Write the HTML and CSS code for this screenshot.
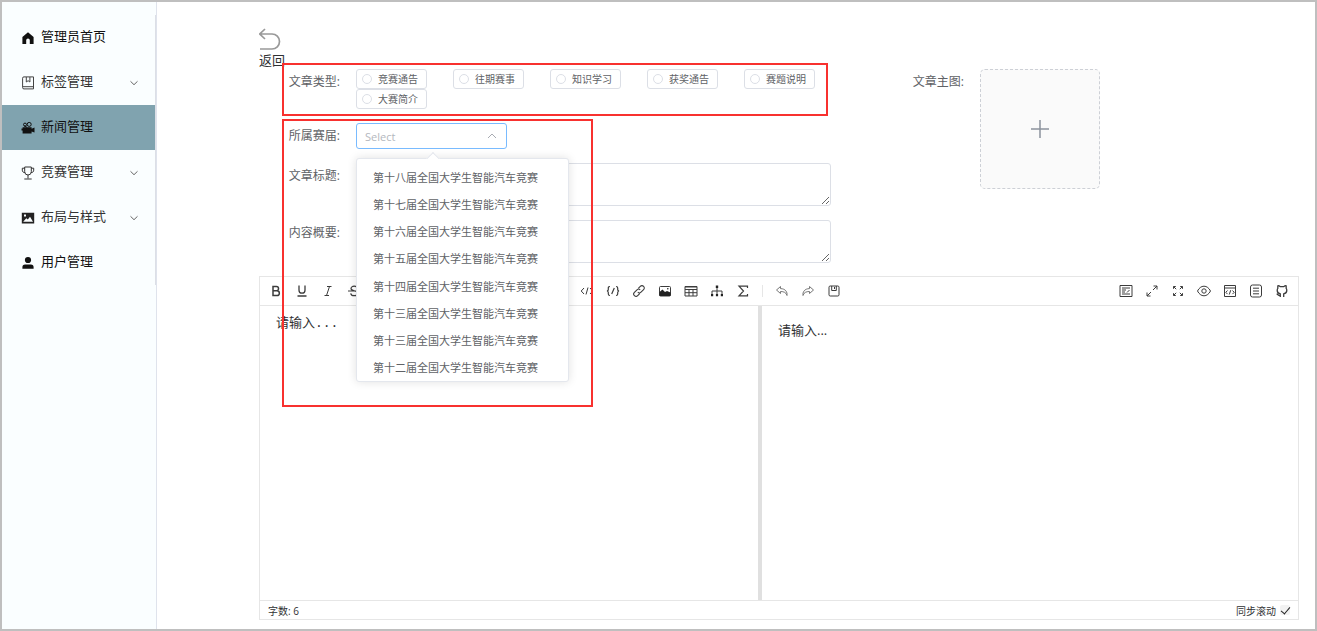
FILE: index.html
```html
<!DOCTYPE html>
<html lang="zh-CN">
<head>
<meta charset="utf-8">
<title>新闻管理</title>
<link rel="stylesheet" href="styles.css">
</head>
<body>
<div class="app">
  <aside class="sidebar">
    <nav class="menu">
      <a class="menu-item" href="#">
        <svg class="menu-icon" viewBox="0 0 14 14"><path fill="#111" d="M7 1.2 1.4 6v7h3.8V9.2a1.8 1.8 0 0 1 3.6 0V13h3.8V6z"/></svg>
        <span class="menu-text">管理员首页</span>
      </a>
      <a class="menu-item menu-sub" href="#">
        <svg class="menu-icon" viewBox="0 0 14 14"><path fill="none" stroke="#444" d="M3 .9h9.500v12H3a1.300 1.300 0 0 1-1.400-1.300V2.200A1.300 1.300 0 0 1 3 .9zM1.800 10.700h10.700M5.300 1v5l1.800-1.300L8.900 6V1"/></svg>
        <span class="menu-text">标签管理</span>
        <svg class="chevron" viewBox="0 0 10 10"><path fill="none" stroke="#666" d="m1.5 3.3 3.5 3.4 3.5-3.4"/></svg>
      </a>
      <a class="menu-item menu-active" href="#">
        <svg class="menu-icon" viewBox="0 0 14 14"><g fill="#111"><path d="M1.6 6.3h9v1.5l2.9-1.2v5l-2.9-1v1.9h-9zM.5 7.5h2v2h-2z"/><path fill="none" stroke="#111" d="M6 6.3 3 4.8"/></g><g fill="none" stroke="#111"><circle cx="4" cy="3.6" r="1.5"/><circle cx="8.2" cy="3.4" r="2"/></g></svg>
        <span class="menu-text">新闻管理</span>
      </a>
      <a class="menu-item menu-sub" href="#">
        <svg class="menu-icon" viewBox="0 0 14 14"><path fill="none" stroke="#333" d="M3.7 1h6.6v4.700a3.3 3.3 0 0 1-6.6 0zM3.700 2.200H1.300v2a2.2 2.2 0 0 0 2.600 2.300M10.300 2.200h2.400v2a2.2 2.2 0 0 1-2.600 2.300M7 9v3.500M3.300 13h7.400"/></svg>
        <span class="menu-text">竞赛管理</span>
        <svg class="chevron" viewBox="0 0 10 10"><path fill="none" stroke="#666" d="m1.5 3.3 3.5 3.4 3.5-3.4"/></svg>
      </a>
      <a class="menu-item menu-sub" href="#">
        <svg class="menu-icon" viewBox="0 0 14 14"><path fill="#222" fill-rule="evenodd" d="M.8 1.8h12.4v10.6H.8zM2.2 10.8h9.8L9 5.8 6.8 8.6 5.3 7.2zM3 3.6v2h2v-2z"/></svg>
        <span class="menu-text">布局与样式</span>
        <svg class="chevron" viewBox="0 0 10 10"><path fill="none" stroke="#666" d="m1.5 3.3 3.5 3.4 3.5-3.4"/></svg>
      </a>
      <a class="menu-item" href="#">
        <svg class="menu-icon" viewBox="0 0 14 14"><circle cx="7" cy="4" r="3.1" fill="#111"/><path fill="#111" d="M1.4 12.8v-1.6A2.7 2.7 0 0 1 4.1 8.5h5.8a2.7 2.7 0 0 1 2.7 2.7v1.6z"/></svg>
        <span class="menu-text">用户管理</span>
      </a>
    </nav>
  </aside>

  <main class="main">
    <button class="back" type="button">
      <svg class="back-icon" viewBox="0 0 22 24"><path fill="none" stroke="#999" stroke-width="1.7" d="M6 1 .8 6l5.200 5M1 6h12a6.900 6.900 0 0 1 0 15H1"/></svg>
      <span>返回</span>
    </button>

    <form class="form">
      <div class="fields">
        <div class="row">
          <span class="label" id="type-label">文章类型:</span>
          <div class="radios" role="radiogroup" aria-labelledby="type-label">
            <label class="radio"><input type="radio" name="type">竞赛通告</label>
            <label class="radio"><input type="radio" name="type">往期赛事</label>
            <label class="radio"><input type="radio" name="type">知识学习</label>
            <label class="radio"><input type="radio" name="type">获奖通告</label>
            <label class="radio"><input type="radio" name="type">赛题说明</label>
            <label class="radio"><input type="radio" name="type">大赛简介</label>
          </div>
        </div>
        <div class="row">
          <label class="label" for="session">所属赛届:</label>
          <div class="select-wrap">
            <select class="select" id="session"><option>Select</option></select>
            <svg class="select-arrow" viewBox="0 0 10 10"><path fill="none" stroke="#a8abb2" d="M1 7l4-4 4 4"/></svg>
            <div class="popper">
              <ul class="options" role="listbox" aria-label="所属赛届">
                <li role="option">第十八届全国大学生智能汽车竞赛</li>
                <li role="option">第十七届全国大学生智能汽车竞赛</li>
                <li role="option">第十六届全国大学生智能汽车竞赛</li>
                <li role="option">第十五届全国大学生智能汽车竞赛</li>
                <li role="option">第十四届全国大学生智能汽车竞赛</li>
                <li role="option">第十三届全国大学生智能汽车竞赛</li>
                <li role="option">第十三届全国大学生智能汽车竞赛</li>
                <li role="option">第十二届全国大学生智能汽车竞赛</li>
              </ul>
            </div>
          </div>
        </div>
        <div class="row">
          <label class="label" for="title">文章标题:</label>
          <textarea class="textarea" id="title"></textarea>
        </div>
        <div class="row">
          <label class="label" for="summary">内容概要:</label>
          <textarea class="textarea" id="summary"></textarea>
        </div>
        <div class="mark mark-types"></div>
        <div class="mark mark-session"></div>
      </div>
      <div class="row cover">
        <span class="label" id="cover-label">文章主图:</span>
        <button class="upload" type="button" aria-labelledby="cover-label">
          <svg class="upload-icon" viewBox="0 0 20 20"><path stroke="#8c939d" stroke-width="1.5" d="M10 1v18M1 10h18"/></svg>
        </button>
      </div>
    </form>

    <section class="editor">
      <div class="toolbar">
        <div class="tools">
          <button class="tool" type="button" aria-label="加粗"><svg viewBox="0 0 14 14"><path stroke-width="1.5" d="M4 2.5h3.4a2.1 2.1 0 0 1 0 4.3H4zM4 6.8h4a2.3 2.3 0 0 1 0 4.7H4z"/></svg></button>
          <button class="tool" type="button" aria-label="下划线"><svg viewBox="0 0 14 14"><path stroke-width="1.3" d="M4 1.5v4.7a3 3 0 0 0 6 0V1.5M2.5 12h9"/></svg></button>
          <button class="tool" type="button" aria-label="斜体"><svg viewBox="0 0 14 14"><path d="M6 2.5h4.5M3.5 11.5H8M8.5 2.5l-3 9"/></svg></button>
          <button class="tool" type="button" aria-label="删除线"><svg viewBox="0 0 14 14"><path stroke-width="1.2" d="M10.3 4.2C10 2.8 8.7 2.2 7.2 2.2 5.3 2.2 4 3.2 4 4.6 4 7.5 10.5 6 10.5 9.2c0 1.5-1.4 2.5-3.3 2.5-1.8 0-3.2-.8-3.5-2.4M1 7h12"/></svg></button>
        </div>
        <div class="tools tools-insert">
          <button class="tool" type="button" aria-label="行内代码"><svg viewBox="0 0 14 14"><path d="M4 4 1.2 7 4 10M10 4l2.800 3L10 10M8 3.5l-2 7"/></svg></button>
          <button class="tool" type="button" aria-label="块级代码"><svg viewBox="0 0 14 14"><path stroke-width="1.2" d="M4 2.500c-1.500 0-1.700.5-1.700 1.500v1.500c0 .8-.3 1.300-1.300 1.500 1 .2 1.300.7 1.300 1.500V10c0 1 .2 1.500 1.700 1.500M10 2.500c1.500 0 1.700.5 1.700 1.500v1.500c0 .8.300 1.300 1.300 1.500-1 .2-1.300.7-1.300 1.500V10c0 1-.2 1.500-1.700 1.500M8.300 4 5.700 10"/></svg></button>
          <button class="tool" type="button" aria-label="链接"><svg viewBox="0 0 14 14"><path stroke-width="1.1" d="m6.300 4.300 2-2a2.300 2.300 0 0 1 3.300 3.300L9 8.200a2.300 2.300 0 0 1-3.200 0M7.700 9.700l-2 2a2.300 2.300 0 0 1-3.300-3.300L5 5.800a2.300 2.300 0 0 1 3.200 0"/></svg></button>
          <button class="tool" type="button" aria-label="图片"><svg viewBox="0 0 14 14"><rect x="1.5" y="2.5" width="11" height="9.5" rx="1"/><path class="solid" d="M1.5 12V8l3-2.5L7 8l2-1 3.500 1.500V12z"/><circle class="solid" cx="9.8" cy="4.8" r=".8"/></svg></button>
          <button class="tool" type="button" aria-label="表格"><svg viewBox="0 0 14 14"><path d="M1 2.5h12V12H1zM1 5.500h12M1 8.700h12M5 5.500V12M9 5.500V12M1 3h12"/></svg></button>
          <button class="tool" type="button" aria-label="图表"><svg viewBox="0 0 14 14"><path d="M7 3v8M2 10V7h10v3"/><path class="solid" d="M5.800 1.500h2.400v2.400H5.800zM1 10h2.200v2.200H1zM5.900 10h2.200v2.200H5.900zM10.800 10H13v2.200h-2.200z"/></svg></button>
          <button class="tool" type="button" aria-label="公式"><svg viewBox="0 0 14 14"><path stroke-width="1.2" d="M11.500 4V2.200H3L7.500 7 3 11.800h8.500V10"/></svg></button>
        </div>
        <span class="divider"></span>
        <div class="tools">
          <button class="tool tool-light" type="button" aria-label="后退"><svg viewBox="0 0 14 14"><path d="M5.500 2.500 1.500 6l4 3.500v-2C9 7.500 11 8.500 12 11.500 12.500 8 10.500 4.700 5.500 4.600z"/></svg></button>
          <button class="tool tool-light" type="button" aria-label="前进"><svg viewBox="0 0 14 14"><path d="m8.500 2.500 4 3.500-4 3.500v-2C5 7.500 3 8.500 2 11.500 1.500 8 3.500 4.700 8.500 4.600z"/></svg></button>
          <button class="tool" type="button" aria-label="保存"><svg viewBox="0 0 14 14"><rect x="2" y="2" width="10" height="10" rx="1.2"/><path d="M4.700 2v4.500h4.600V2M7.500 3v2"/></svg></button>
        </div>
        <div class="tools tools-view">
          <button class="tool" type="button" aria-label="美化"><svg viewBox="0 0 14 14"><path d="M1 1.500h12v11H1zM3 4h8M3 6h4M3 8h3M3 10h8M8 8.500 10.500 6"/></svg></button>
          <button class="tool" type="button" aria-label="页面全屏"><svg viewBox="0 0 14 14"><path d="M8 6l4-4M6 8l-4 4M8.500 2H12v3.500M5.500 12H2V8.500"/></svg></button>
          <button class="tool" type="button" aria-label="屏幕全屏"><svg viewBox="0 0 14 14"><path d="M5.200 5.200 2.700 2.700M8.800 5.200l2.500-2.500M5.200 8.800l-2.500 2.500M8.800 8.800l2.500 2.500M2.500 4.800V2.500h2.300M9.200 2.500h2.300v2.300M2.500 9.200v2.300h2.300M9.200 11.500h2.300V9.200"/></svg></button>
          <button class="tool" type="button" aria-label="预览"><svg viewBox="0 0 14 14"><path d="M.5 7C2 4 4.300 2.200 7 2.200S12 4 13.500 7C12 10 9.700 11.800 7 11.800S2 10 .5 7z"/><circle cx="7" cy="7" r="2.200"/></svg></button>
          <button class="tool" type="button" aria-label="源码预览"><svg viewBox="0 0 14 14"><path d="M1.500 1.500h11v11h-11zM1.500 4h11M4.500 6.500 2.800 8.300l1.700 1.800M9.500 6.500l1.700 1.800-1.700 1.800M7.700 6.200l-1.400 4.300"/></svg></button>
          <button class="tool" type="button" aria-label="目录"><svg viewBox="0 0 14 14"><rect x="1.5" y="1" width="11" height="12" rx="2"/><path d="M4 4.200h6M4 7h6M4 9.800h6"/></svg></button>
          <button class="tool" type="button" aria-label="源码地址"><svg viewBox="0 0 14 14"><path stroke-width="1.3" d="M5.300 13v-3.200C3.300 9.500 2.200 8.300 2.200 6.200c0-.9.200-1.500.7-2.100-.3-.8-.2-1.600.1-2.400 1 .1 1.700.5 2.400 1h3.200c.7-.5 1.400-.9 2.400-1 .3.800.4 1.600.1 2.400.5.600.7 1.200.7 2.100 0 2.100-1.100 3.300-3.100 3.600V13M5.300 11.500c-2 .4-2.200-1.200-3.600-1.500"/></svg></button>
        </div>
      </div>
      <div class="panes">
        <textarea class="source" aria-label="文章内容">请输入...</textarea>
        <div class="splitter"></div>
        <div class="preview"><p class="preview-text">请输入...</p></div>
      </div>
      <div class="status">
        <span>字数: 6</span>
        <label class="sync">同步滚动<input type="checkbox" checked></label>
      </div>
    </section>
  </main>
</div>
</body>
</html>
```

FILE: styles.css
```css
* { box-sizing: border-box; }

body {
  margin: 0;
  color: #303133;
  font: 13px "Open Sans", "Noto Sans CJK SC", sans-serif;
}

button, select, textarea, input { margin: 0; font: inherit; color: inherit; }
button { padding: 0; border: 0; background: none; cursor: pointer; }

.app {
  display: flex;
  min-height: 100vh;
  border: 2px solid #bfbfbf;
  background: #fff;
}

/* Sidebar */
.sidebar {
  flex: none;
  width: 155px;
  padding-top: 13px;
  border-right: 1px solid #dfe3ec;
  background: #fafeff;
}
.menu { border-right: 1px solid #dcdfe6; }
.menu-item {
  display: flex;
  align-items: center;
  height: 45px;
  padding: 0 16px 0 19px;
  color: #111;
  text-decoration: none;
}
.menu-sub { color: #333; }
.menu-active { background: #80a3af; }
.menu-icon { width: 14px; height: 14px; margin-right: 6px; }
.menu-text { flex: 1; line-height: 18px; padding-bottom: 3px; }
.chevron { width: 10px; height: 10px; }

/* Content */
.main {
  display: flex;
  flex: 1;
  flex-direction: column;
  min-width: 0;
  padding: 26px 16px 9px 102px;
}
.back {
  display: flex;
  flex-direction: column;
  align-self: flex-start;
  line-height: 17px;
}
.back-icon { width: 22px; height: 24px; }

.form {
  display: grid;
  grid-template-columns: 11fr 9fr;
  color: #606266;
  font-size: 12px;
}
.fields {
  position: relative;
  display: flex;
  flex-direction: column;
  gap: 14px;
  padding-bottom: 13px;
}
.row { display: flex; align-items: flex-start; }
.label {
  flex: none;
  width: 97px;
  padding-right: 16px;
  line-height: 26px;
  text-align: right;
}
.radios { display: flex; flex: 1; flex-wrap: wrap; column-gap: 26px; }
.radio {
  display: flex;
  align-items: center;
  gap: 6px;
  height: 20px;
  padding: 0 8px 0 5px;
  border: 1px solid #dcdfe6;
  border-radius: 3px;
  font-size: 10px;
  line-height: 18px;
}
.radio input {
  appearance: none;
  width: 10px;
  height: 10px;
  border: 1px solid #dcdfe6;
  border-radius: 50%;
}

.select-wrap { position: relative; width: 151px; }
.select {
  display: block;
  appearance: none;
  width: 100%;
  height: 26px;
  padding: 0 24px 0 8px;
  border: 1px solid #79bbff;
  border-radius: 3px;
  background: #fff;
  color: #b4b7be;
  font-size: 11px;
}
.select-arrow { position: absolute; top: 8px; right: 10px; width: 10px; height: 10px; }

.popper {
  position: absolute;
  z-index: 2;
  top: 35px;
  left: 0;
  width: 213px;
  padding-top: 4px;
  border: 1px solid #e4e7ed;
  border-radius: 3px;
  background: #fff;
  box-shadow: 0 0 10px rgba(0, 0, 0, 0.12);
}
.popper::before {
  content: "";
  position: absolute;
  top: -5px;
  left: 71px;
  width: 8px;
  height: 8px;
  border: 1px solid #e4e7ed;
  border-color: #e4e7ed transparent transparent #e4e7ed;
  background: #fff;
  transform: rotate(45deg);
}
.options {
  display: flex;
  flex-direction: column;
  height: 218px;
  margin: 0;
  padding: 0;
  overflow: hidden;
  list-style: none;
}
.options li {
  display: flex;
  flex: 1;
  align-items: center;
  padding-left: 16px;
  font-size: 11px;
  white-space: nowrap;
}

.textarea {
  flex: 1;
  height: 43px;
  border: 1px solid #dcdfe6;
  border-radius: 3px;
  background: #fff;
}

.cover .label { width: 149px; }
.upload {
  display: flex;
  align-items: center;
  justify-content: center;
  width: 120px;
  height: 120px;
  border: 1px dashed #cdd0d6;
  border-radius: 5px;
  background: #fafafa;
}
.upload-icon { width: 20px; height: 20px; }

/* Highlight frames */
.mark { position: absolute; z-index: 3; left: 23px; border: 2px solid #f8312f; pointer-events: none; }
.mark-types { top: -6px; right: 3px; height: 53px; }
.mark-session { top: 50px; width: 311px; height: 288px; }

/* Editor */
.editor {
  display: flex;
  flex: 1;
  flex-direction: column;
  border: 1px solid #e6e6e6;
}
.toolbar {
  display: flex;
  align-items: center;
  padding: 0 3px;
  border-bottom: 1px solid #e6e6e6;
}
.tools { display: flex; }
.tools-insert { margin-left: 207px; }
.tools-view { margin-left: auto; }
.tool {
  display: flex;
  align-items: center;
  justify-content: center;
  width: 26px;
  height: 28px;
}
.tool svg { width: 14px; height: 14px; fill: none; stroke: #3c3c3c; }
.tool .solid { fill: #222; stroke: none; }
.tool-light svg { stroke: #777; }
.divider { width: 1px; height: 12px; margin: 0 6px; background: #e6e6e6; }

.panes { display: flex; flex: 1; }
.source {
  flex: 1;
  min-width: 0;
  padding: 8px 16px;
  border: 0;
  background: #fff;
  font: 13px/20px "Liberation Mono", "Noto Sans CJK SC", monospace;
  resize: none;
}
.splitter { width: 4px; background: #e0e0e0; }
.preview { width: 536px; padding: 14px 16px; }
.preview-text { margin: 0; line-height: 20px; }

.status {
  display: flex;
  align-items: center;
  justify-content: space-between;
  height: 19px;
  padding: 0 8px;
  border-top: 1px solid #e6e6e6;
  font-size: 10px;
}
.sync { display: flex; align-items: center; gap: 4px; }
.sync input {
  appearance: none;
  display: flex;
  justify-content: center;
  width: 10px;
  height: 10px;
  border-radius: 2px;
  background: #f2f2f2;
}
.sync input:checked::after {
  content: "";
  width: 4px;
  height: 8px;
  border: solid #222;
  border-width: 0 1px 1px 0;
  transform: rotate(40deg);
}
```
